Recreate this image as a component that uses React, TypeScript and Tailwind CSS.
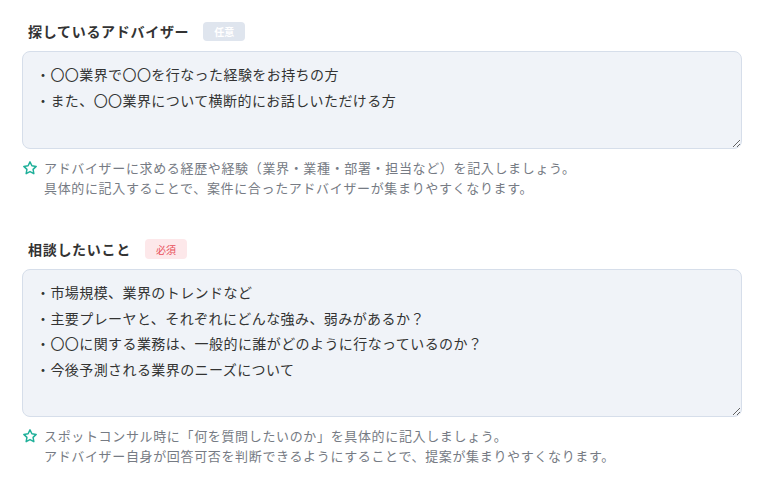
import { useState } from "react";

// --- ヒント用の星アイコン ---
const StarIcon = () => (
  <svg viewBox="0 0 24 24" className="w-[16px] h-[16px] shrink-0 mt-[2px]" fill="none" stroke="#1fb09a" strokeWidth={2.2} strokeLinejoin="round">
    <path d="M12 2.8l2.85 5.9 6.45.9-4.7 4.5 1.15 6.4L12 17.4l-5.75 3.1 1.15-6.4-4.7-4.5 6.45-.9z" />
  </svg>
);

type FieldProps = {
  label: string;
  required: boolean;
  value: string;
  height: string;
  hints: string[];
};

const Field = ({ label, required, value, height, hints }: FieldProps) => {
  const [text, setText] = useState(value);
  return (
    <div>
      <div className="flex items-center gap-[14px] pl-[6px] h-[20px]">
        <span className="text-[14px] font-bold tracking-[0.05em] text-[#333]">{label}</span>
        {required ? (
          <span className="w-[42px] h-[20px] flex items-center justify-center rounded-[4px] bg-[#fde8ea] text-[10px] text-[#e8505b]">必須</span>
        ) : (
          <span className="w-[42px] h-[19px] flex items-center justify-center rounded-[4px] bg-[#dfe5ee] text-[10px] font-bold text-white">任意</span>
        )}
      </div>
      <textarea
        value={text}
        onChange={(e) => setText(e.target.value)}
        className={`block w-full mt-[10px] ${height} rounded-[8px] border border-[#d6deea] bg-[#f0f3f8] pl-[13px] pr-3 pt-[10px] text-[14px] leading-[25.7px] tracking-[0.03em] text-[#333] outline-none`}
      />
      <div className="flex gap-[6px] mt-[9px]">
        <StarIcon />
        <div className="text-[13px] leading-[20px] tracking-[0.05em] text-[#767b84]">
          {hints.map((h) => (
            <p key={h}>{h}</p>
          ))}
        </div>
      </div>
    </div>
  );
};

export default function App() {
  return (
    <div className="w-[763px] h-[488px] bg-white pt-[21px] pl-[22px] pr-[21px] font-['Noto_Sans_CJK_JP',sans-serif] flex flex-col gap-[41px]">
      <Field
        label="探しているアドバイザー"
        required={false}
        height="h-[98px]"
        value={"・〇〇業界で〇〇を行なった経験をお持ちの方\n・また、〇〇業界について横断的にお話しいただける方"}
        hints={[
          "アドバイザーに求める経歴や経験（業界・業種・部署・担当など）を記入しましょう。",
          "具体的に記入することで、案件に合ったアドバイザーが集まりやすくなります。",
        ]}
      />
      <Field
        label="相談したいこと"
        required={true}
        height="h-[148px]"
        value={"・市場規模、業界のトレンドなど\n・主要プレーヤと、それぞれにどんな強み、弱みがあるか？\n・〇〇に関する業務は、一般的に誰がどのように行なっているのか？\n・今後予測される業界のニーズについて"}
        hints={[
          "スポットコンサル時に「何を質問したいのか」を具体的に記入しましょう。",
          "アドバイザー自身が回答可否を判断できるようにすることで、提案が集まりやすくなります。",
        ]}
      />
    </div>
  );
}
